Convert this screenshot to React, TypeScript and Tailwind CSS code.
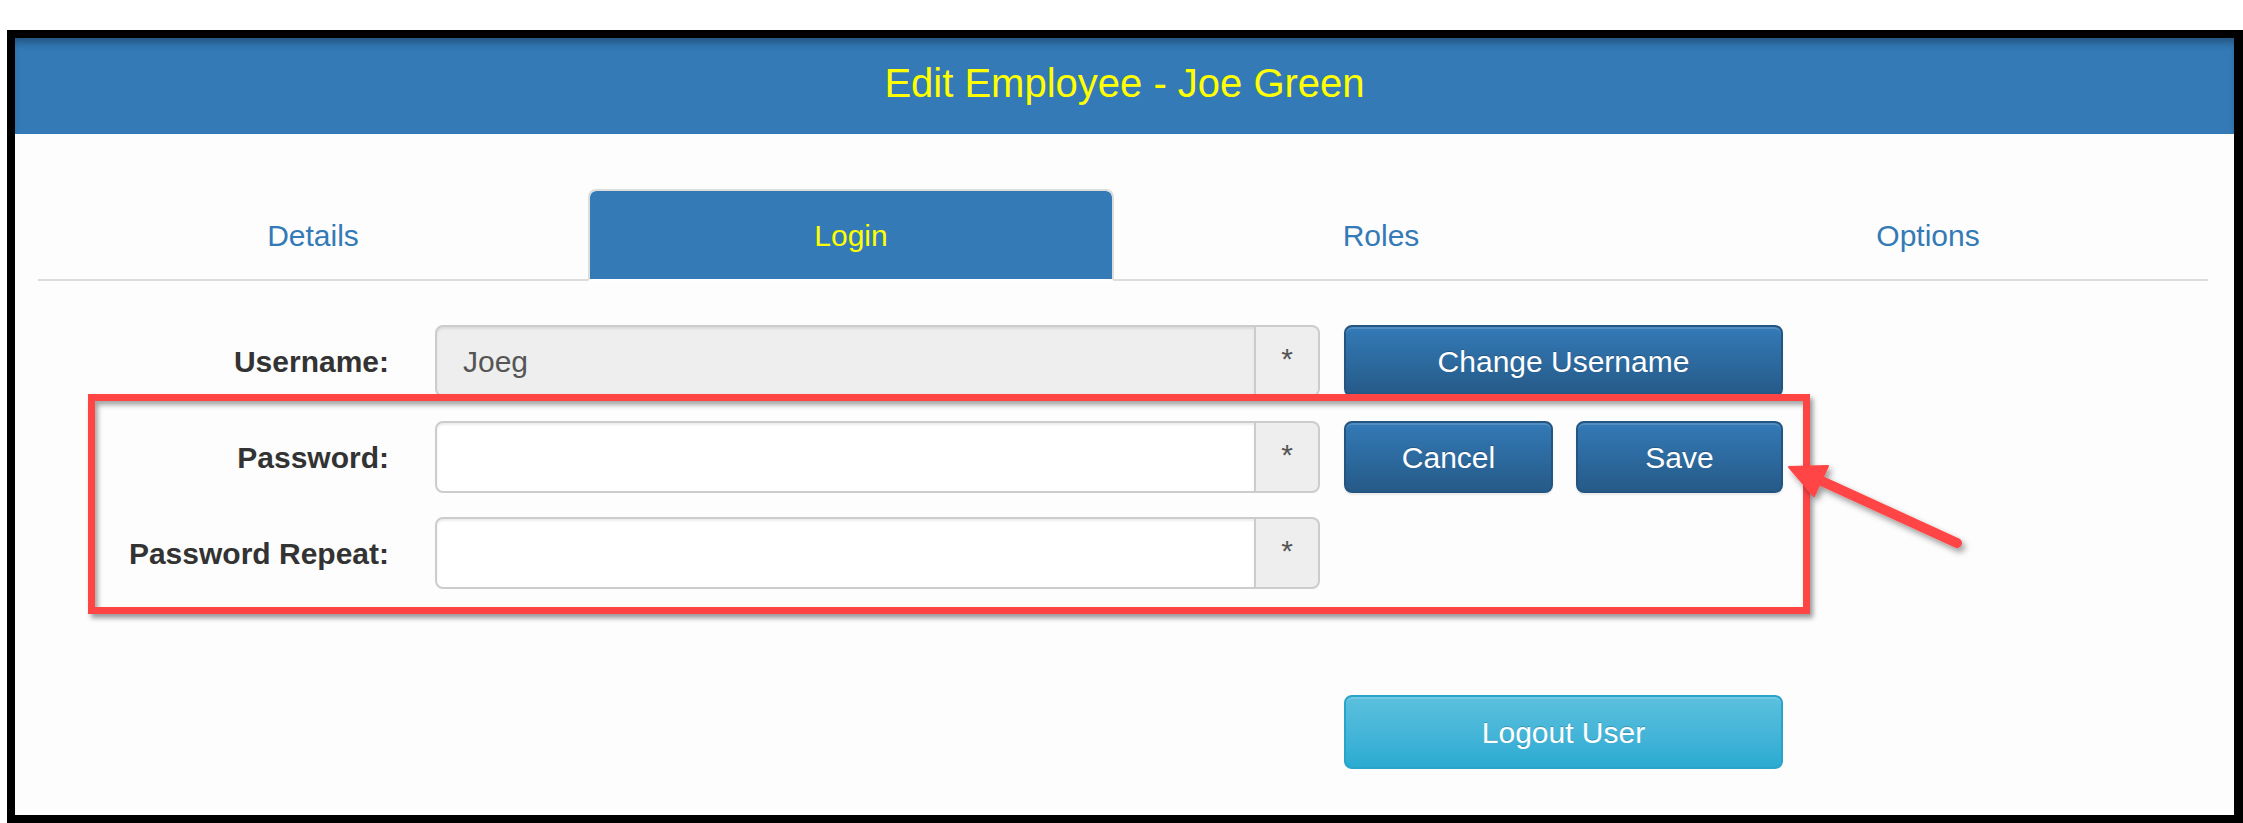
import React from 'react';

const tabs = [
  { label: 'Details', width: 'w-[550px]' },
  { label: 'Login', width: 'w-[526px]', active: true },
  { label: 'Roles', width: 'w-[534px]' },
  { label: 'Options', width: 'w-[560px]' },
];

const primaryBtn =
  'h-[72px] rounded-[8px] border-2 border-[#245580] bg-gradient-to-b from-[#337ab7] to-[#265a88] text-white text-[30px] [text-shadow:0_-1px_0_rgba(0,0,0,0.2)] shadow-[inset_0_2px_0_rgba(255,255,255,0.15),0_2px_2px_rgba(0,0,0,0.08)]';

/**
 * Text field with the "*" addon on the right
 */
const RequiredInput: React.FC<{ value?: string; disabled?: boolean }> = ({ value = '', disabled = false }) => (
  <div className="flex h-[72px] w-[885px]">
    <div
      className={`flex flex-1 items-center rounded-l-[8px] border-2 border-[#ccc] px-[26px] text-[30px] text-[#555] shadow-[inset_0_2px_2px_rgba(0,0,0,0.075)] ${
        disabled ? 'bg-[#eee]' : 'bg-white'
      }`}
    >
      {value}
    </div>
    <div className="flex w-[64px] items-center justify-center rounded-r-[8px] border-2 border-l-0 border-[#ccc] bg-[#eee] pb-[6px] text-[30px] text-[#555]">
      *
    </div>
  </div>
);

const FormRow: React.FC<{ label: string; children: React.ReactNode }> = ({ label, children }) => (
  <div className="flex h-[72px] items-center">
    <div className="w-[351px] text-right text-[30px] font-bold text-[#333]">{label}</div>
    <div className="ml-[46px]">{children}</div>
  </div>
);

export default function App() {
  return (
    <div
      className="relative h-[823px] w-[2243px] overflow-hidden bg-white pl-[7px] pt-[30px]"
      style={{ fontFamily: '"Liberation Sans", Arial, sans-serif' }}
    >
      <div className="flex h-[793px] w-[2236px] flex-col border-[8px] border-r-[9px] border-black bg-[#fdfdfd]">
        {/* Header */}
        <div className="flex h-[96px] shrink-0 items-center justify-center bg-[#337ab7] pb-[6px] shadow-[inset_0_8px_8px_-4px_rgba(0,0,0,0.35)]">
          <h1 className="text-[40px] text-[#ffff00]">Edit Employee - Joe Green</h1>
        </div>

        {/* Tabs */}
        <div className="ml-[23px] mt-[55px] flex">
          {tabs.map((t) =>
            t.active ? (
              <div
                key={t.label}
                className={`${t.width} flex h-[92px] items-center justify-center rounded-t-[8px] border-2 border-[#ddd] border-b-white bg-[#337ab7] bg-clip-padding text-[30px] text-[#ffff00]`}
              >
                {t.label}
              </div>
            ) : (
              <div
                key={t.label}
                className={`${t.width} flex h-[92px] items-center justify-center border-b-2 border-[#ddd] pt-[2px] text-[30px] text-[#337ab7]`}
              >
                {t.label}
              </div>
            )
          )}
        </div>

        {/* Login form */}
        <div className="mt-[44px] flex flex-col gap-[24px] pl-[23px]">
          <div className="flex items-center gap-[24px]">
            <FormRow label="Username:">
              <RequiredInput value="Joeg" disabled />
            </FormRow>
            <button className={`${primaryBtn} w-[439px]`}>Change Username</button>
          </div>
          <div className="flex items-center gap-[24px]">
            <FormRow label="Password:">
              <RequiredInput />
            </FormRow>
            <div className="flex gap-[23px]">
              <button className={`${primaryBtn} w-[209px]`}>Cancel</button>
              <button className={`${primaryBtn} w-[207px]`}>Save</button>
            </div>
          </div>
          <FormRow label="Password Repeat:">
            <RequiredInput />
          </FormRow>
        </div>

        <div className="mt-[106px] pl-[1329px]">
          <button className="h-[74px] w-[439px] rounded-[8px] border-2 border-[#28a4c9] bg-gradient-to-b from-[#5bc0de] to-[#2aabd2] text-[30px] text-white [text-shadow:0_-1px_0_rgba(0,0,0,0.2)] shadow-[inset_0_2px_0_rgba(255,255,255,0.15)]">
            Logout User
          </button>
        </div>
      </div>

      {/* Annotation: red highlight box */}
      <div className="absolute left-[88px] top-[394px] h-[220px] w-[1722px] border-[7px] border-[#ff4444] shadow-[3px_4px_5px_rgba(0,0,0,0.4),inset_3px_4px_5px_rgba(0,0,0,0.35)]" />

      {/* Annotation: arrow pointing at Save */}
      <svg className="absolute left-0 top-0" width="2243" height="823" viewBox="0 0 2243 823">
        <defs>
          <filter id="arrowShadow" x="-20%" y="-20%" width="140%" height="140%">
            <feDropShadow dx="3" dy="4" stdDeviation="3" floodColor="#000" floodOpacity="0.4" />
          </filter>
        </defs>
        <g filter="url(#arrowShadow)" fill="#ff4444" stroke="#ff4444">
          <line x1="1957" y1="543" x2="1815" y2="478" strokeWidth="10" strokeLinecap="round" />
          <polygon points="1789,467 1828,466 1814,496" strokeWidth="2" strokeLinejoin="round" />
        </g>
      </svg>
    </div>
  );
}
